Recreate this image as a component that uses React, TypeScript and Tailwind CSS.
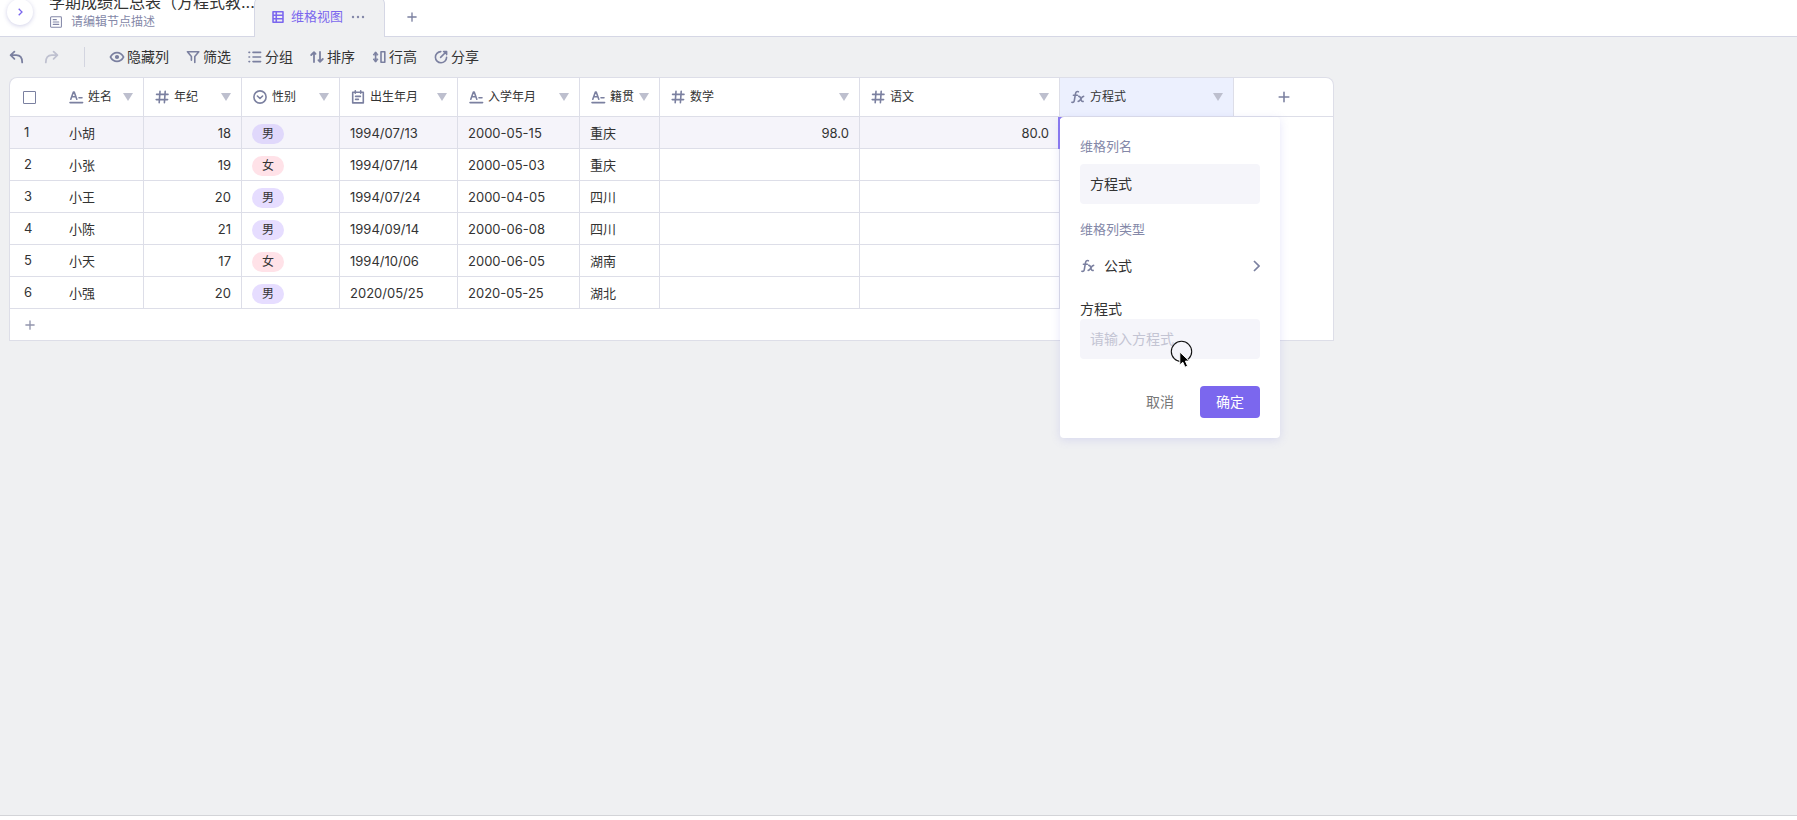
import React from "react";

type IconProps = { className?: string };

function Svg({ className = "size-4", children, width = 1.6 }: IconProps & { children: React.ReactNode; width?: number }) {
  return (
    <svg
      viewBox="0 0 16 16"
      className={`shrink-0 ${className}`}
      fill="none"
      stroke="currentColor"
      strokeWidth={width}
      strokeLinecap="round"
      strokeLinejoin="round"
      aria-hidden="true"
    >
      {children}
    </svg>
  );
}

const TextIcon = () => (
  <Svg>
    <path d="M2.800 10.200 5.400 3h.8l2.600 7.200M3.800 7.800h4M11 8.800h3M2 13.600h12.600" />
  </Svg>
);
const NumberIcon = () => (
  <Svg>
    <path d="M6 2.400 5.200 13.800M11.200 2.400 10.400 13.800M2.600 5.400h11.400M2.200 10.600h11.400" />
  </Svg>
);
const SelectIcon = () => (
  <Svg>
    <circle cx="8" cy="8" r="6.100" />
    <path d="m5.400 7 2.600 2.500L10.600 7" />
  </Svg>
);
const DateIcon = () => (
  <Svg>
    <path d="M2.700 3.300h10.600v10.600H2.700zM5.300 1.800v2.400M10.700 1.800v2.400M5.600 7.400h4.800M5.600 10.400h2.800" />
  </Svg>
);
const FormulaIcon = () => (
  <Svg>
    <path d="M8.400 2.700c-1.800-.7-2.600.3-2.900 1.900L4.300 11.600c-.3 1.500-1 2.100-2.400 1.700M3.400 6.200h4M8.800 7.400c1.300-.3 1.600.6 2.100 2.500.5 2 .9 2.900 2.200 2.500M13.600 7.400c-1.300 0-1.800.9-2.700 2.500-.9 1.600-1.300 2.500-2.700 2.500" />
  </Svg>
);
const PlusIcon = ({ className }: IconProps) => (
  <Svg className={className} width={1.8}>
    <path d="M8 2.500v11M2.500 8h11" />
  </Svg>
);
const Triangle = () => (
  <svg viewBox="0 0 10 8" className="h-2 w-2.5 shrink-0 fill-[#bdbfce]" aria-hidden="true">
    <path d="M0 0h10L5 8z" />
  </svg>
);

const columns = [
  { label: "年纪", icon: <NumberIcon /> },
  { label: "性别", icon: <SelectIcon /> },
  { label: "出生年月", icon: <DateIcon /> },
  { label: "入学年月", icon: <TextIcon /> },
  { label: "籍贯", icon: <TextIcon /> },
  { label: "数学", icon: <NumberIcon /> },
  { label: "语文", icon: <NumberIcon /> },
];

const rows = [
  { name: "小胡", age: 18, sex: "男", birth: "1994/07/13", entry: "2000-05-15", home: "重庆", math: "98.0", chinese: "80.0" },
  { name: "小张", age: 19, sex: "女", birth: "1994/07/14", entry: "2000-05-03", home: "重庆", math: "", chinese: "" },
  { name: "小王", age: 20, sex: "男", birth: "1994/07/24", entry: "2000-04-05", home: "四川", math: "", chinese: "" },
  { name: "小陈", age: 21, sex: "男", birth: "1994/09/14", entry: "2000-06-08", home: "四川", math: "", chinese: "" },
  { name: "小天", age: 17, sex: "女", birth: "1994/10/06", entry: "2000-06-05", home: "湖南", math: "", chinese: "" },
  { name: "小强", age: 20, sex: "男", birth: "2020/05/25", entry: "2020-05-25", home: "湖北", math: "", chinese: "" },
];

const tools = [
  {
    label: "隐藏列",
    icon: (
      <Svg>
        <path d="M1.400 8C3 5.100 5.300 3.600 8 3.600S13 5.100 14.600 8C13 10.900 10.700 12.400 8 12.400S3 10.900 1.400 8z" />
        <circle cx="8" cy="8" r="1.300" fill="currentColor" />
      </Svg>
    ),
  },
  {
    label: "筛选",
    icon: (
      <Svg>
        <path d="M2.400 2.800h11.400L9.800 7.400v6M6.400 11.200V7.400L2.400 2.800" />
      </Svg>
    ),
  },
  {
    label: "分组",
    icon: (
      <Svg>
        <path d="M2 3.400h.6M2 8h.6M2 12.600h.6M6 3.400h7.600M6 8h7.600M6 12.600h7.600" />
      </Svg>
    ),
  },
  {
    label: "排序",
    icon: (
      <Svg width={1.8}>
        <path d="M5 13V3.200L2.200 6M5 3.200l1.600 1.600M11 3v9.800L13.800 10M11 12.800l-1.600-1.600" />
      </Svg>
    ),
  },
  {
    label: "行高",
    icon: (
      <Svg>
        <path d="M10 2.800h3.800v10.400H10zM4.600 4v8" />
        <path d="m2.400 5.600 2.200-2.800 2.200 2.800zM2.400 10.400l2.200 2.800 2.200-2.800z" fill="currentColor" strokeWidth="1" />
      </Svg>
    ),
  },
  {
    label: "分享",
    icon: (
      <Svg>
        <path d="M7.800 2.600a5.600 5.600 0 1 0 5.800 5.800M7.600 8.400l5.600-5.600M10.600 2.600h3v3" />
      </Svg>
    ),
  },
];

const headCell = "h-10 border-y border-r border-[#dddee8] bg-white px-2.5 text-left font-normal";
const cell = "h-8 border-b border-r border-[#dddee8] px-2.5 pt-0.5";

function HeadContent({ icon, label }: { icon: React.ReactNode; label: string }) {
  return (
    <div className="flex items-center gap-1 text-xs text-[#333]">
      <span className="text-[#7b80a0]">{icon}</span>
      <span className="grow whitespace-nowrap">{label}</span>
      <button type="button" aria-label={`${label} 菜单`}>
        <Triangle />
      </button>
    </div>
  );
}

function FieldPanel() {
  return (
    <form className="absolute top-full left-0 z-10 mt-px flex w-[220px] flex-col rounded bg-white px-5 pt-5 pb-5 text-sm text-[#333] shadow-[0_2px_10px_rgba(110,110,220,0.18)]">
      <label htmlFor="field-name" className="mb-2 text-[13px] leading-[18px] text-[#8488a8]">
        维格列名
      </label>
      <input
        id="field-name"
        defaultValue="方程式"
        className="mt-px h-10 w-full rounded bg-[#f5f5fa] px-2.5 pb-0.5 outline-none"
      />
      <div className="mt-4 mb-2 text-[13px] leading-[18px] text-[#8488a8]">维格列类型</div>
      <button type="button" className="flex h-10 items-center gap-2 text-left">
        <span className="text-[#7b80a0]">
          <FormulaIcon />
        </span>
        <span className="grow">公式</span>
        <svg viewBox="0 0 7 12" className="h-3 w-[7px] text-[#7b80a0]" fill="none" stroke="currentColor" strokeWidth="1.700" aria-hidden="true">
          <path d="m1 1 5 5-5 5" />
        </svg>
      </button>
      <label htmlFor="field-formula" className="mt-[13px] leading-5">
        方程式
      </label>
      <input
        id="field-formula"
        placeholder="请输入方程式"
        className="h-10 w-full rounded bg-[#f5f5fa] px-2.5 pb-0.5 outline-none placeholder:text-[#c3c4d3]"
      />
      <div className="mt-[27px] flex justify-end">
        <button type="button" className="h-8 w-20 text-[#777]">
          取消
        </button>
        <button type="button" className="h-8 w-[60px] rounded bg-[#7b67ee] text-white">
          确定
        </button>
      </div>
      <svg
        viewBox="0 0 24 30"
        className="pointer-events-none absolute top-[223px] left-[110px] h-[30px] w-6"
        aria-hidden="true"
      >
        <circle cx="11.500" cy="11.500" r="10.200" fill="none" stroke="#111" strokeWidth="1.100" />
        <path d="M9.800 12v13l3-2.800 2.200 5 2.600-1.100-2.200-5h4z" fill="#000" stroke="#fff" strokeWidth="1" />
      </svg>
    </form>
  );
}

export default function App() {
  return (
    <div className="flex min-h-screen flex-col bg-[#eff0f2] font-[Inter,'Noto_Sans_CJK_SC',sans-serif] text-[#333]">
      <header className="flex h-[37px] overflow-hidden bg-white">
        <div className="flex w-[254px] shrink-0 border-b border-[#d5d7e5]">
          <button
            type="button"
            aria-label="展开"
            className="-mt-px ml-[7px] flex size-[26px] shrink-0 items-center justify-center rounded-full bg-white text-[#7b67ee] shadow-[0_1px_4px_rgba(100,100,180,0.3)]"
          >
            <svg viewBox="0 0 5 8" className="h-2 w-[5px]" fill="none" stroke="currentColor" strokeWidth="1.300" aria-hidden="true">
              <path d="m.7.7 3.300 3.300L.7 7.300" />
            </svg>
          </button>
          <div className="-mt-2 ml-4 flex min-w-0 flex-col">
            <h1 className="whitespace-nowrap text-base leading-5">学期成绩汇总表（方程式教...</h1>
            <div className="flex items-center gap-2 text-xs leading-5 text-[#8488a8]">
              <Svg className="size-3.5" width={1.200}>
                <path d="M2.800 2h10.400a1 1 0 0 1 1 1v10a1 1 0 0 1-1 1H2.800a1 1 0 0 1-1-1V3a1 1 0 0 1 1-1zM4.800 5.300h3.600M4.800 8h6.400M4.800 10.700h6.400" />
              </Svg>
              请编辑节点描述
            </div>
          </div>
        </div>
        <div className="-mt-1 flex w-[131px] shrink-0 items-center rounded-t-lg border border-b-0 border-[#d5d7e5] bg-[#eff0f2] pl-4 text-[13px] text-[#7b67ee]">
          <Svg className="mr-1.5 size-3.5" width={1.800}>
            <path d="M2.300 2h11.400v12H2.300zM2.300 6h11.400M2.300 10h11.400M6 2v12" />
          </Svg>
          <span className="whitespace-nowrap">维格视图</span>
          <button type="button" aria-label="更多" className="ml-2 text-[#8488a8]">
            <svg viewBox="0 0 14 4" className="h-1 w-3.5" fill="currentColor" aria-hidden="true">
              <circle cx="2" cy="2" r="1.200" />
              <circle cx="7" cy="2" r="1.200" />
              <circle cx="12" cy="2" r="1.200" />
            </svg>
          </button>
        </div>
        <div className="flex grow items-center border-b border-[#d5d7e5] pl-[21px]">
          <button type="button" aria-label="添加视图" className="-mt-0.5 text-[#7b80a0]">
            <PlusIcon className="size-3" />
          </button>
        </div>
      </header>

      <div className="flex h-10 items-center pl-2 text-sm">
        <button type="button" aria-label="撤销" className="text-[#7b80a0]">
          <Svg width={1.800}>
            <path d="M6.400 2.600 2.600 6.200l3.800 3.600M2.800 6.200h5.400c4 0 6 2.600 6 7.200" />
          </Svg>
        </button>
        <button type="button" aria-label="重做" className="ml-5 text-[#bfc1d0]">
          <Svg width={1.800}>
            <path d="M9.600 2.600l3.800 3.600-3.800 3.600M13.200 6.200H7.800c-4 0-6 2.600-6 7.200" />
          </Svg>
        </button>
        <div className="ml-6 h-5 w-px bg-[#d3d5e0]" />
        <div className="ml-6 flex gap-4">
          {tools.map((tool) => (
            <button key={tool.label} type="button" className="flex items-center gap-0.5 whitespace-nowrap">
              <span className="text-[#7b80a0]">{tool.icon}</span>
              {tool.label}
            </button>
          ))}
        </div>
      </div>

      <main className="grow pl-[9px]">
        <table className="w-[1325px] table-fixed border-separate border-spacing-0 text-[13px]">
          <colgroup>
            <col className="w-[49px]" />
            <col className="w-[86px]" />
            <col className="w-[98px]" />
            <col className="w-[98px]" />
            <col className="w-[118px]" />
            <col className="w-[122px]" />
            <col className="w-[80px]" />
            <col className="w-[200px]" />
            <col className="w-[200px]" />
            <col className="w-[174px]" />
            <col className="w-[100px]" />
          </colgroup>
          <thead>
            <tr>
              <th className="rounded-tl-lg border-y border-l border-[#dddee8] bg-white pl-[13px] text-left">
                <input
                  type="checkbox"
                  aria-label="全选"
                  className="block size-[13px] appearance-none rounded-[1px] border border-[#7b80a0] outline-1 -outline-offset-1 outline-[#7b80a0]/40"
                />
              </th>
              <th className={headCell}>
                <HeadContent icon={<TextIcon />} label="姓名" />
              </th>
              {columns.map((column) => (
                <th key={column.label} className={headCell}>
                  <HeadContent icon={column.icon} label={column.label} />
                </th>
              ))}
              <th className="relative border-y border-r border-[#dddee8] bg-[#ecf0fe] px-2.5 text-left font-normal">
                <HeadContent icon={<FormulaIcon />} label="方程式" />
                <FieldPanel />
              </th>
              <th className="rounded-tr-lg border-y border-r border-[#dddee8] bg-white">
                <button type="button" aria-label="添加列" className="mx-auto block text-[#7b80a0]">
                  <PlusIcon className="size-3.5" />
                </button>
              </th>
            </tr>
          </thead>
          <tbody>
            {rows.map((row, index) => (
              <tr key={row.name} className={index === 0 ? "bg-[#f5f4fa]" : "bg-white"}>
                <td className="border-b border-l border-[#dddee8] pl-[14px]">{index + 1}</td>
                <td className={cell}>
                  <span className="pl-px">{row.name}</span>
                </td>
                <td className={`${cell} text-right`}>{row.age}</td>
                <td className={cell}>
                  <span
                    className={`flex h-5 w-8 items-center justify-center rounded-full text-xs ${
                      row.sex === "女" ? "bg-[#ffe2e8]" : index === 0 ? "bg-[#e0d8fb]" : "bg-[#e6ddff]"
                    }`}
                  >
                    {row.sex}
                  </span>
                </td>
                <td className={cell}>{row.birth}</td>
                <td className={cell}>{row.entry}</td>
                <td className={cell}>{row.home}</td>
                <td className={`${cell} text-right`}>{row.math}</td>
                <td className={`${cell} text-right`}>{row.chinese}</td>
                <td className={`${cell} relative`}>
                  {index === 0 && <span className="absolute inset-0 -left-0.5 -bottom-px border-2 border-[#8b7af0]" />}
                </td>
                {index === 0 && <td rowSpan={rows.length} className="border-r border-[#dddee8] bg-white" />}
              </tr>
            ))}
            <tr>
              <td colSpan={11} className="h-8 border-x border-b border-[#dddee8] bg-white pl-[14px]">
                <button type="button" aria-label="添加行" className="block text-[#9295ad]">
                  <PlusIcon className="size-3" />
                </button>
              </td>
            </tr>
          </tbody>
        </table>
      </main>

      <footer className="h-[5px] border-t border-[#d3d4d8] bg-white" />
    </div>
  );
}
